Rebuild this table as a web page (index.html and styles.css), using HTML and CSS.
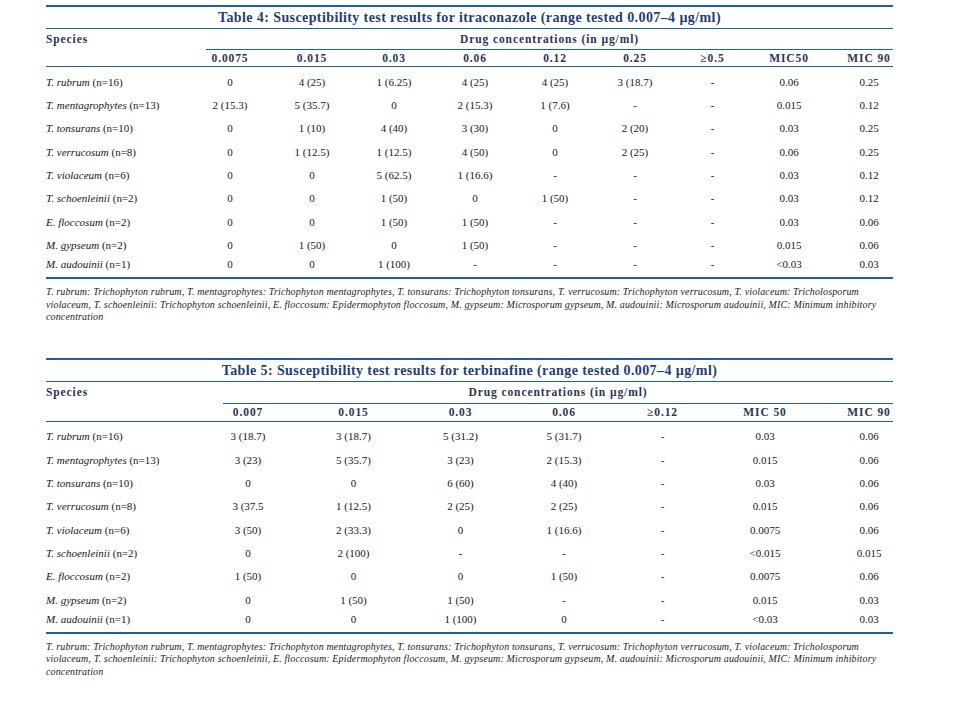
FILE: index.html
```html
<!DOCTYPE html>
<html lang="en">
<head>
<meta charset="utf-8">
<title>Susceptibility test results</title>
<link rel="stylesheet" href="styles.css">
</head>
<body>
<div class="page">

<section class="tbl t4">
  <h2 class="title">Table 4: Susceptibility test results for itraconazole (range tested 0.007–4 µg/ml)</h2>
  <div class="head">
    <div class="sp-h">Species</div>
    <div class="drug-h">Drug concentrations (in µg/ml)</div>
    <div class="col-h">0.0075</div><div class="col-h">0.015</div><div class="col-h">0.03</div><div class="col-h">0.06</div><div class="col-h">0.12</div><div class="col-h">0.25</div><div class="col-h">≥0.5</div><div class="col-h">MIC50</div><div class="col-h">MIC 90</div>
  </div>
  <div class="row"><div class="sp"><i>T. rubrum</i> (n=16)</div><div>0</div><div>4 (25)</div><div>1 (6.25)</div><div>4 (25)</div><div>4 (25)</div><div>3 (18.7)</div><div>-</div><div>0.06</div><div>0.25</div></div>
  <div class="row"><div class="sp"><i>T. mentagrophytes</i> (n=13)</div><div>2 (15.3)</div><div>5 (35.7)</div><div>0</div><div>2 (15.3)</div><div>1 (7.6)</div><div>-</div><div>-</div><div>0.015</div><div>0.12</div></div>
  <div class="row"><div class="sp"><i>T. tonsurans</i> (n=10)</div><div>0</div><div>1 (10)</div><div>4 (40)</div><div>3 (30)</div><div>0</div><div>2 (20)</div><div>-</div><div>0.03</div><div>0.25</div></div>
  <div class="row"><div class="sp"><i>T. verrucosum</i> (n=8)</div><div>0</div><div>1 (12.5)</div><div>1 (12.5)</div><div>4 (50)</div><div>0</div><div>2 (25)</div><div>-</div><div>0.06</div><div>0.25</div></div>
  <div class="row"><div class="sp"><i>T. violaceum</i> (n=6)</div><div>0</div><div>0</div><div>5 (62.5)</div><div>1 (16.6)</div><div>-</div><div>-</div><div>-</div><div>0.03</div><div>0.12</div></div>
  <div class="row"><div class="sp"><i>T. schoenleinii</i> (n=2)</div><div>0</div><div>0</div><div>1 (50)</div><div>0</div><div>1 (50)</div><div>-</div><div>-</div><div>0.03</div><div>0.12</div></div>
  <div class="row"><div class="sp"><i>E. floccosum</i> (n=2)</div><div>0</div><div>0</div><div>1 (50)</div><div>1 (50)</div><div>-</div><div>-</div><div>-</div><div>0.03</div><div>0.06</div></div>
  <div class="row"><div class="sp"><i>M. gypseum</i> (n=2)</div><div>0</div><div>1 (50)</div><div>0</div><div>1 (50)</div><div>-</div><div>-</div><div>-</div><div>0.015</div><div>0.06</div></div>
  <div class="row last"><div class="sp"><i>M. audouinii</i> (n=1)</div><div>0</div><div>0</div><div>1 (100)</div><div>-</div><div>-</div><div>-</div><div>-</div><div>&lt;0.03</div><div>0.03</div></div>
  <p class="note">T. rubrum: Trichophyton rubrum, T. mentagrophytes: Trichophyton mentagrophytes, T. tonsurans: Trichophyton tonsurans, T. verrucosum: Trichophyton verrucosum, T. violaceum: Tricholosporum<br>violaceum, T. schoenleinii: Trichophyton schoenleinii, E. floccosum: Epidermophyton floccosum, M. gypseum: Microsporum gypseum, M. audouinii: Microsporum audouinii, MIC: Minimum inhibitory<br>concentration</p>
</section>

<section class="tbl t5">
  <h2 class="title">Table 5: Susceptibility test results for terbinafine (range tested 0.007–4 µg/ml)</h2>
  <div class="head">
    <div class="sp-h">Species</div>
    <div class="drug-h">Drug concentrations (in µg/ml)</div>
    <div class="col-h">0.007</div><div class="col-h">0.015</div><div class="col-h">0.03</div><div class="col-h">0.06</div><div class="col-h">≥0.12</div><div class="col-h">MIC 50</div><div class="col-h">MIC 90</div>
  </div>
  <div class="row"><div class="sp"><i>T. rubrum</i> (n=16)</div><div>3 (18.7)</div><div>3 (18.7)</div><div>5 (31.2)</div><div>5 (31.7)</div><div>-</div><div>0.03</div><div>0.06</div></div>
  <div class="row"><div class="sp"><i>T. mentagrophytes</i> (n=13)</div><div>3 (23)</div><div>5 (35.7)</div><div>3 (23)</div><div>2 (15.3)</div><div>-</div><div>0.015</div><div>0.06</div></div>
  <div class="row"><div class="sp"><i>T. tonsurans</i> (n=10)</div><div>0</div><div>0</div><div>6 (60)</div><div>4 (40)</div><div>-</div><div>0.03</div><div>0.06</div></div>
  <div class="row"><div class="sp"><i>T. verrucosum</i> (n=8)</div><div>3 (37.5</div><div>1 (12.5)</div><div>2 (25)</div><div>2 (25)</div><div>-</div><div>0.015</div><div>0.06</div></div>
  <div class="row"><div class="sp"><i>T. violaceum</i> (n=6)</div><div>3 (50)</div><div>2 (33.3)</div><div>0</div><div>1 (16.6)</div><div>-</div><div>0.0075</div><div>0.06</div></div>
  <div class="row"><div class="sp"><i>T. schoenleinii</i> (n=2)</div><div>0</div><div>2 (100)</div><div>-</div><div>-</div><div>-</div><div>&lt;0.015</div><div>0.015</div></div>
  <div class="row"><div class="sp"><i>E. floccosum</i> (n=2)</div><div>1 (50)</div><div>0</div><div>0</div><div>1 (50)</div><div>-</div><div>0.0075</div><div>0.06</div></div>
  <div class="row"><div class="sp"><i>M. gypseum</i> (n=2)</div><div>0</div><div>1 (50)</div><div>1 (50)</div><div>-</div><div>-</div><div>0.015</div><div>0.03</div></div>
  <div class="row last"><div class="sp"><i>M. audouinii</i> (n=1)</div><div>0</div><div>0</div><div>1 (100)</div><div>0</div><div>-</div><div>&lt;0.03</div><div>0.03</div></div>
  <p class="note">T. rubrum: Trichophyton rubrum, T. mentagrophytes: Trichophyton mentagrophytes, T. tonsurans: Trichophyton tonsurans, T. verrucosum: Trichophyton verrucosum, T. violaceum: Tricholosporum<br>violaceum, T. schoenleinii: Trichophyton schoenleinii, E. floccosum: Epidermophyton floccosum, M. gypseum: Microsporum gypseum, M. audouinii: Microsporum audouinii, MIC: Minimum inhibitory<br>concentration</p>
</section>

</div>
</body>
</html>
```

FILE: styles.css
```css
html, body {
  margin: 0;
  background: #ffffff;
}

body {
  font-family: "Liberation Serif", "Times New Roman", serif;
  color: #161616;
}

.page {
  padding: 5px 66px 0 46px;
}

.tbl {
  border-top: 2px solid #1d5ea5;
}

.t4 {
  --cols: 143px 82px 82px 82px 80px 80px 80px 75px 78px 65px;
  --lastpad: 17px;
  --drugpad: 17px;
}

.t5 {
  --cols: 150px 104px 107px 107px 100px 97px 108px 74px;
  --lastpad: 26px;
  --drugpad: 27px;
  margin-top: 34px;
}

.title {
  margin: 0;
  height: 21px;
  line-height: 21px;
  text-align: center;
  font-size: 14px;
  font-weight: bold;
  letter-spacing: 0.4px;
  color: #1f3d78;
  border-bottom: 1px solid #1d5ea5;
}

.head {
  display: grid;
  grid-template-columns: var(--cols);
  font-size: 11.5px;
  font-weight: bold;
  letter-spacing: 0.9px;
  color: #2a3552;
}

.sp-h {
  grid-row: 1 / span 2;
  padding-top: 2px;
  line-height: 16px;
  border-bottom: 1px solid #1d5ea5;
}

.drug-h {
  grid-column: 2 / -1;
  margin-left: var(--drugpad);
  padding: 2px 0;
  line-height: 16px;
  text-align: center;
  border-bottom: 1px solid #1d5ea5;
}

.col-h {
  line-height: 16px;
  text-align: center;
  border-bottom: 1px solid #1d5ea5;
}

.head .col-h:last-child {
  padding-left: var(--lastpad);
}

.t5 .drug-h {
  padding-bottom: 3px;
}

.t5 .col-h {
  line-height: 17px;
}

.row {
  display: grid;
  grid-template-columns: var(--cols);
  box-sizing: border-box;
  height: 23.4px;
  font-size: 11px;
}

.row > div {
  padding-top: 7.5px;
  line-height: 14px;
  text-align: center;
  white-space: nowrap;
}

.row > div:last-child {
  padding-left: var(--lastpad);
}

.row > .sp {
  text-align: left;
}

.row.last {
  height: auto;
  padding-bottom: 6px;
  border-bottom: 2px solid #1d5ea5;
}

.row.last > div {
  padding-top: 3px;
}

.note {
  margin: 7px 0 0;
  font-size: 10px;
  font-style: italic;
  line-height: 12.5px;
  letter-spacing: 0.14px;
  color: #222222;
  white-space: nowrap;
}
```
